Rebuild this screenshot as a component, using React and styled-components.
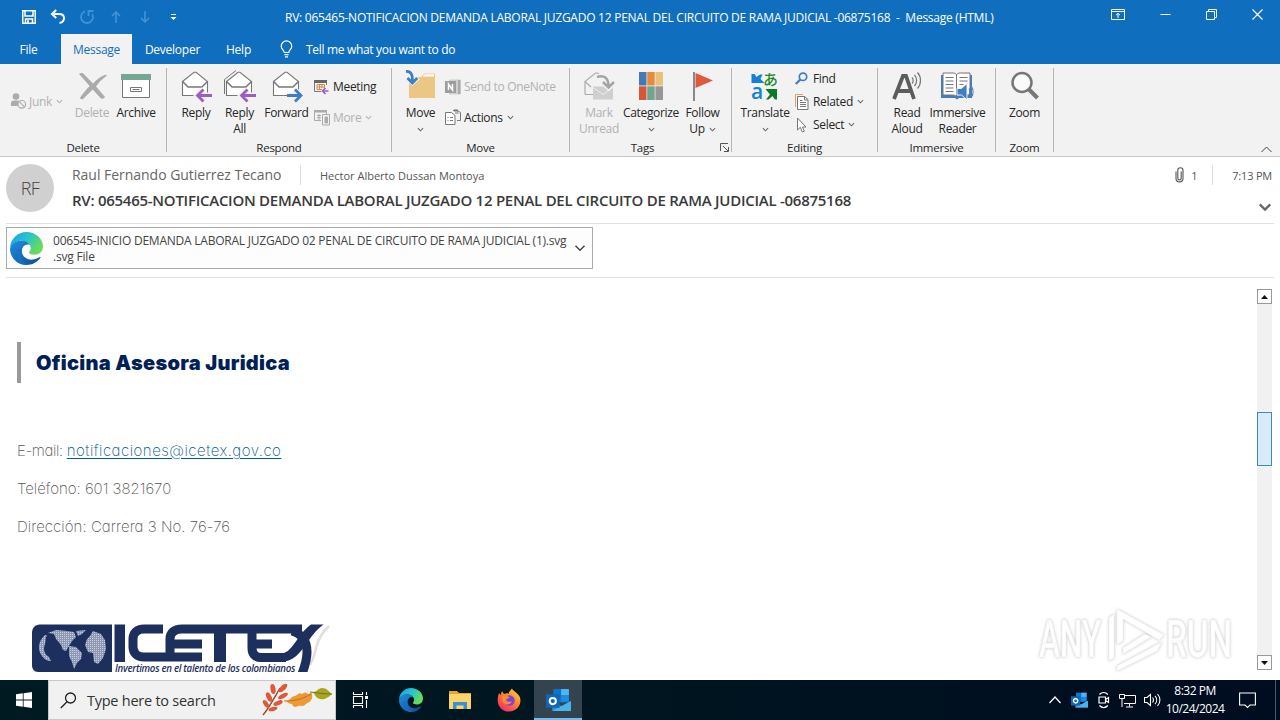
import React from "react";
import styled, { createGlobalStyle } from "styled-components";

const colors = {
  blue: "#106ebe",
  ribbon: "#f2f2f2",
  line: "#c6c6c6",
  text: "#262626",
  muted: "#b1b1b1",
  purple: "#9b5fc0",
  arrow: "#3f7fc1",
  navy: "#1d2f5c",
};

const ChevronDown = ({ size = 7, color = "#666", weight = 1.2 }) => (
  <svg width={size} height={size} viewBox="0 0 8 8" fill="none">
    <path d="M1 2.5 4 5.5 7 2.5" stroke={color} strokeWidth={weight} />
  </svg>
);

/* title bar icons */

const SaveIcon = () => (
  <svg width="16" height="16" viewBox="0 0 16 16" fill="none" stroke="#fff" strokeWidth="1.5">
    <path d="M1.75 1.75h12.5v12.5H1.75zM4 2v5h8V2M4.5 14v-4h7v4" />
    <path d="M7 11v3" />
  </svg>
);

const UndoIcon = () => (
  <svg width="16" height="16" viewBox="0 0 16 16" fill="none" stroke="#fff" strokeWidth="2">
    <path d="M6.2 1 2 5l4.2 4M2.500 5h6.500c3 0 5 1.800 5 4.300s-1.800 4.200-4.500 4.700" />
  </svg>
);

const RedoIcon = () => (
  <svg width="16" height="16" viewBox="0 0 16 16" fill="none" stroke="#3f92d6" strokeWidth="1.8">
    <path d="M6 2.300A6 6 0 1 0 13.200 5M9.500 7V2h5" />
  </svg>
);

const ArrowIcon = ({ down }) => (
  <svg width="12" height="14" viewBox="0 0 12 14" fill="none" stroke="#3f92d6" strokeWidth="1.7">
    {down ? <path d="M6 1v11M2 8l4 4 4-4" /> : <path d="M6 13V2M2 6l4-4 4 4" />}
  </svg>
);

const CustomizeIcon = () => (
  <svg width="7" height="8" viewBox="0 0 7 8" fill="#fff">
    <path d="M1 1h5v1H1zM.5 4h6l-3 3z" />
  </svg>
);

const BulbIcon = () => (
  <svg width="13" height="18" viewBox="0 0 13 18" fill="none" stroke="#fff" strokeWidth="1.2">
    <path d="M4.200 12.500c0-2.200-3-3.200-3-6.300a5.300 5.300 0 0 1 10.600 0c0 3.100-3 4.100-3 6.300zM4.400 14.600h4.200M5 16.800h3" />
  </svg>
);

const RibbonDisplayIcon = () => (
  <svg width="14" height="11" viewBox="0 0 14 11" fill="none" stroke="#fff">
    <path d="M.5.5h13v10H.5zM.5 2.500h13M7 9V4.500M5 6.200 7 4.300l2 1.900" />
  </svg>
);

const MinimizeIcon = () => (
  <svg width="11" height="11" viewBox="0 0 11 11" stroke="#fff">
    <path d="M.5 5.500h10" />
  </svg>
);

const RestoreIcon = () => (
  <svg width="11" height="11" viewBox="0 0 11 11" fill="none" stroke="#fff">
    <path d="M.5 2.500h8v8h-8zM2.500 2V.5h8v8H9" />
  </svg>
);

const CloseIcon = () => (
  <svg width="11" height="11" viewBox="0 0 11 11" stroke="#fff" strokeWidth="1.1">
    <path d="m.5.5 10 10m0-10-10 10" />
  </svg>
);

/* ribbon icons */

const JunkIcon = () => (
  <svg width="18" height="18" viewBox="0 0 18 18" fill="none">
    <circle cx="6" cy="4.500" r="3.300" fill="#ababab" />
    <path d="M1 14V11c0-1.700 1-2.600 3-2.600h5L7.500 14z" fill="#ababab" />
    <circle cx="11.800" cy="12.300" r="3.800" fill="#f2f2f2" stroke="#ababab" strokeWidth="1.200" />
    <path d="m9.200 9.600 5.300 5.300" stroke="#ababab" strokeWidth="1.200" />
  </svg>
);

const DeleteIcon = () => (
  <svg width="32" height="32" viewBox="0 0 32 32" fill="#ababab">
    <path d="M3 4c2-1.500 4-1 5.500.8L17 13.500C21 9 25 6 30 4.500l.8 1.200C26 9 23 12 20 16.500l9 10.500c-1 2.200-3.500 2.200-5 .5l-7.300-8L6.500 29.500 3.700 28.300C7 23.500 10 19.500 13.700 16z" />
  </svg>
);

const ArchiveIcon = () => (
  <svg width="32" height="32" viewBox="0 0 32 32" fill="none">
    <path d="M2.500 9.500h27v18h-27z" fill="#fff" stroke="#777" />
    <path d="M1 4h30v6H1z" fill="#74a894" />
    <path d="M10.500 17.500h11v4h-11zM12.500 19.500h7" stroke="#777" />
  </svg>
);

const Envelope = ({ color = "#777" }) => (
  <g stroke={color} strokeWidth="1.100" fill="#fff">
    <path d="M3.500 12.500v14h25v-14" />
    <path d="M3.500 12.500 15 3.300h2l11.500 9.200-5.500 5.500H9z" />
    <path d="M3.500 12.500 9 18h14l5.500-5.500" fill="none" />
  </g>
);

const MailIcon = ({ all, forward }) => (
  <svg width="34" height="34" viewBox="0 0 34 34" fill="none">
    {all && <path d="M1.500 25V10.500L13 1.500" stroke="#777" />}
    <Envelope />
    {forward ? (
      <path d="M17 26.500h13M24.500 20.500l6 6-6 6" stroke="#f2f2f2" strokeWidth="6" />
    ) : (
      <path d="M31 26.500H19M24.500 20.500l-6 6 6 6" stroke="#f2f2f2" strokeWidth="6" />
    )}
    {forward ? (
      <path d="M17 26.500h14M25 20.500l6 6-6 6" stroke={colors.arrow} strokeWidth="2.800" />
    ) : (
      <path d="M33 26.500H19M24.500 20.500l-6 6 6 6" stroke={colors.purple} strokeWidth="2.800" />
    )}
  </svg>
);

const MeetingIcon = () => (
  <svg width="16" height="16" viewBox="0 0 16 16" fill="none">
    <path d="M1.500 3v9.500H8M13.500 3v3" stroke="#777" />
    <path d="M1 1h13v3H1z" fill="#666" />
    <path d="M4 5.500h7.500V9M4 5.500v5h5M4 8h7M6.500 5.500v5M9 5.500V9" stroke="#d78b4e" />
    <path d="M15.500 12H9.500M12.500 9l-3 3 3 3" stroke={colors.purple} strokeWidth="1.700" />
  </svg>
);

const MoreIcon = () => (
  <svg width="17" height="17" viewBox="0 0 17 17" fill="none" stroke="#ababab">
    <path d="M1.500 3v8.500H8M13.500 3v2" />
    <path d="M1 1h13v2.500H1z" fill="#ababab" stroke="none" />
    <path d="M4 6.500h4M4 8.800h4M6 5v6" />
    <path d="M9.500 5.500h7v10.500h-7z" fill="#f2f2f2" />
    <path d="M12 8h2.500v6H12z" fill="#ababab" />
  </svg>
);

const MoveIcon = () => (
  <svg width="32" height="32" viewBox="0 0 32 32" fill="none">
    <path d="M4 7h12l3.500-3.500H30V28H4z" fill="#ebc684" />
    <path d="M17.500 6.500 20 4.300h9v2.200z" fill="#fff" />
    <path d="M1 1c5-.5 6.800 3 6.300 10M2.500 7.500l4.800 5L13 7.500" stroke="#f2f2f2" strokeWidth="5" />
    <path d="M1 1.500c5-.5 6.800 3 6.300 10M2.500 8l4.800 5 5-5" stroke={colors.arrow} strokeWidth="2.800" />
  </svg>
);

const OneNoteIcon = () => (
  <svg width="16" height="16" viewBox="0 0 16 16">
    <path d="M4 .5h11.500v15H4z" fill="#cfcfcf" />
    <path d="M0 2h11v12H0z" fill="#9d9d9d" />
    <path d="M13 1h2.500v14H13z" fill="#a9a9a9" />
    <path d="M3.500 11V5l4 6V5" stroke="#fff" strokeWidth="1.500" fill="none" />
  </svg>
);

const ActionsIcon = () => (
  <svg width="17" height="17" viewBox="0 0 17 17" fill="none" stroke="#777">
    <path d="M.5 3.500h6l3.500 3v9H.5z" fill="#fff" />
    <path d="M2.500 8.500h1M2.500 11.500h1M5 8.500h3M5 11.500h3M8 1.500h4l3.500 2v8H12M10 4h3.500" />
    <path d="M9 1.500h4" strokeWidth="2" />
  </svg>
);

const UnreadIcon = () => (
  <svg width="32" height="32" viewBox="0 0 32 32" fill="none">
    <path d="M2 24.500V11.500L12.500 3h2L23 10" stroke="#ababab" strokeWidth="1.200" fill="none" />
    <path d="m2 11.500 6 5.500M2 24.500h8" stroke="#ababab" strokeWidth="1.200" />
    <path d="M10 16.500h20v13H10z" fill="#cfcfcf" />
    <path d="m10 17.500 10 7 10-7" stroke="#ececec" />
    <path d="M15 7c6-2 10.500 1 10.500 9M19.500 12l6 6 5.500-6" stroke="#f2f2f2" strokeWidth="5" />
    <path d="M14 7c7-2.500 11.500 1 11.500 9M20 12l5.500 5.500L31 12" stroke="#a5a5a5" strokeWidth="2.500" />
  </svg>
);

const CategorizeIcon = () => (
  <svg width="24" height="28" viewBox="0 0 24 28">
    <path d="M0 0h7.500v13.500H0z" fill="#437ab5" />
    <path d="M8.200 0h7.500v13.500H8.200z" fill="#e58b40" />
    <path d="M16.400 0H24v13.500h-7.600z" fill="#e9c17b" />
    <path d="M0 14.300h7.500V28H0z" fill="#d65638" />
    <path d="M8.200 14.300h7.500V28H8.200z" fill="#70a591" />
    <path d="M16.400 14.300H24V28h-7.600z" fill="#979797" />
  </svg>
);

const FlagIcon = () => (
  <svg width="20" height="29" viewBox="0 0 20 29">
    <path d="M2.500 1 20 8.500 2.500 16z" fill="#e0583d" />
    <path d="M1 0v29" stroke="#777" strokeWidth="1.700" />
  </svg>
);

const TranslateIcon = () => (
  <svg width="28" height="30" viewBox="0 0 28 30" overflow="visible">
    <text x="12" y="14" fontFamily="Noto Sans CJK JP, sans-serif" fontSize="15" fontWeight="500" fill="#1f8a2c">
      あ
    </text>
    <text x="0" y="28" fontFamily="Open Sans, sans-serif" fontSize="21" fontWeight="600" fill="#1282d8">
      a
    </text>
    <path d="M.5 3h3l2 3L9 3.500h2.500L9.500 8l4 4H.5z" fill="#1282d8" />
    <path d="M14.500 18h11.500v10.500h-2l-2.500-3.500-4 3.500h-2.500l4-5z" fill="#0b7a25" />
  </svg>
);

const FindIcon = () => (
  <svg width="13" height="13" viewBox="0 0 13 13" fill="none" stroke={colors.arrow}>
    <circle cx="8" cy="4.800" r="3.700" strokeWidth="1.700" />
    <path d="M5.300 7.500.8 12" strokeWidth="2.300" />
  </svg>
);

const RelatedIcon = () => (
  <svg width="14" height="16" viewBox="0 0 14 16" fill="none" stroke="#777">
    <path d="M.5 13V.5H8" stroke="#e2a26c" />
    <path d="M2.500 2.500h7l3.500 3V15.500H2.500z" fill="#fff" />
    <path d="M9.500 2.500v3.500H13M5 8.500h6M5 10.500h6M5 12.500h6M5 6.500h2.500" />
  </svg>
);

const SelectIcon = () => (
  <svg width="12" height="16" viewBox="0 0 12 16" fill="#fff" stroke="#777">
    <path d="M2.500 1v12l2.800-2.700L7.300 15l2-.8L7.500 10H11z" />
  </svg>
);

const ReadAloudIcon = () => (
  <svg width="30" height="32" viewBox="0 0 30 32" fill="none">
    <path d="M2 29 11 6h3l8 23M5.500 21h13" stroke="#5c5c5c" strokeWidth="3.800" />
    <path d="M20 7.500c1.500 1.500 1.500 4.500 0 6M22.500 5c2.800 3 2.800 8 0 11M25.500 2.500c4 4.500 4 11.500 0 16" stroke="#777" strokeWidth="1.200" />
  </svg>
);

const ReaderIcon = () => (
  <svg width="33" height="30" viewBox="0 0 33 30" fill="none">
    <path d="M0 4h31v23H18l-2 1.500L14 27H0z" fill={colors.arrow} />
    <path d="M2 2h10c2 0 3.500 1 3.500 2C15.500 3 17 2 19 2h10v22H19c-2 0-3.500 1-3.500 2 0-1-1.500-2-3.500-2H2z" fill="#fff" stroke="#777" />
    <path d="M15.500 4v22M4.500 6.500h8M4.500 10h8M4.500 13.500h8M4.500 17h8M4.500 20.500h8M18.500 6.500h8M18.500 10h8M18.500 13.500h4" stroke="#777" />
    <path d="M16 17.500h4.500l5.500-5V29l-5.500-5H16z" fill={colors.arrow} stroke="#f2f2f2" />
    <path d="M28 17.500c1.200 2 1.200 4.500 0 6.500M30.500 15.500c2 3 2 7.500 0 10.500" stroke={colors.arrow} strokeWidth="1.200" />
  </svg>
);

const ZoomIcon = () => (
  <svg width="30" height="30" viewBox="0 0 30 30" fill="none" stroke="#777">
    <circle cx="12" cy="11.500" r="9.500" strokeWidth="2.500" fill="#fafafa" />
    <path d="m19 18.500 8.500 8.500" strokeWidth="4" />
  </svg>
);

const LauncherIcon = () => (
  <svg width="9" height="9" viewBox="0 0 9 9" fill="none" stroke="#555">
    <path d="M.5 8V.5H8M3 3l5 5M8.500 4v4.500H4" />
  </svg>
);

/* message icons */

const ClipIcon = () => (
  <svg width="9" height="16" viewBox="0 0 9 16" fill="none" stroke="#555" strokeWidth="1.100">
    <path d="M6.200 4.500v6.800c0 2.200-3.400 2.200-3.400 0V3.200c0-3.200 5.200-3.200 5.200 0v8.300c0 4.500-7 4.500-7 0V4.500" />
  </svg>
);

const EdgeIcon = ({ size, id }) => (
  <svg width={size} height={size} viewBox="0 0 32 32">
    <defs>
      <linearGradient id={`${id}-top`} x1="0" y1="0" x2="1" y2=".5">
        <stop offset="0" stopColor="#1b9de2" />
        <stop offset=".5" stopColor="#25c2d4" />
        <stop offset="1" stopColor="#6bdc55" />
      </linearGradient>
      <linearGradient id={`${id}-low`} x1="0" y1="0" x2="1" y2="1">
        <stop offset="0" stopColor="#1d8fe0" />
        <stop offset="1" stopColor="#114a97" />
      </linearGradient>
    </defs>
    <path d="M16 0c9.500 0 16 7 16 14 0 5-3.800 8-8 8-3 0-5.500-.8-5.500-2.200 0-1 1.700-1.500 1.700-4C20 11.500 16 8.500 11 8.500c-5 0-9 2.500-11 6.500C.8 6.500 7.500 0 16 0z" fill={`url(#${id}-top)`} />
    <path d="M0 16c1-5 5.500-7.500 11-7.500 4 0 7 1.500 8.300 4-4-1.500-7.800 1.500-7.800 6 0 6 6.500 9.500 12 8 2.500-.7 4-1.500 5.500-2.200.5-.2.900.2.500.7C26.500 29.500 21.500 32 16 32 7 32 0 25 0 16z" fill={`url(#${id}-low)`} />
    <path d="M11.500 15c-3 6-1 14 6.500 17-7 .5-12.500-4-12.500-10 0-3 2.500-6 6-7z" fill="#1570c9" opacity=".7" />
  </svg>
);

const IcetexLogo = () => (
  <svg width="302" height="52" viewBox="0 0 302 52">
    <defs>
      <pattern id="dots" width="2" height="2" patternUnits="userSpaceOnUse">
        <rect width="2" height="2" fill="#8c98b4" />
        <rect width="1" height="1" fill="#c6cddc" />
      </pattern>
    </defs>
    <path d="M299 6c-8 7-11 14-13 22-1 6-3 11-6 17" fill="none" stroke="#dedede" strokeWidth="2.500" />
    <path d="M10 4.500h72V52H8c-4 0-6-3-6-7V13c0-5 3-8.500 8-8.500z" fill={colors.navy} />
    <g fill="url(#dots)">
      <path d="M15 15c-7 6-8 15-3 21 2 3 5 5 9 5l-2-4c-5-3-6-8-4-13 1-3 0-6 2-9z" />
      <path d="M18 13l8-3 11 1 7 1 2 5-4 4-3 5-3 5-3-1-2-5-5-6-2-5-6-1z" />
      <path d="M39 26l7 1 6 6-1 6-4 4-3 6-2-7-3-6z" />
      <path d="M46 11l10-1-4 4-4 2zM60 16l3-5 8 3 4 6 1 9-3 9-5 6-4-2-1-9-5-1-3-7 2-6z" />
    </g>
    <path d="M84.500 4.500H95V42H84.500z" fill={colors.navy} />
    <g fill="none" stroke={colors.navy} strokeWidth="9">
      <path d="M133 9h-19c-7 0-11 4-11 10v8c0 6 4 10 11 10h58" />
      <path d="M272 9H152c-8 0-12 4-12 10V36M141 24h31" />
      <path d="M222 10v18c0 6 3 9.500 9 9.500h25M222 24h20" />
      <path d="M190 9V42" strokeWidth="12" />
      <path d="M262 11c10 3 15 10 15 21 0 8-2 14-5 22" strokeWidth="9" />
    </g>
    <path
      d="M281 4.500h12.500c-8 6-12 12-17 19-7 10-13 18.500-27 18.500l-1-8c8 0 12-5 17-12 5-7 9-13 15.500-17.500z"
      fill={colors.navy}
    />
    <text
      x="85"
      y="51.500"
      fontFamily="Open Sans, sans-serif"
      fontSize="10.500"
      fontStyle="italic"
      fontWeight="600"
      fill={colors.navy}
      textLength="180"
      lengthAdjust="spacingAndGlyphs"
    >
      Invertimos en el talento de los colombianos
    </text>
  </svg>
);

const AnyRunMark = () => (
  <svg width="204" height="66" viewBox="0 0 204 66" overflow="visible">
    <g
      fill="#fff"
      stroke="#efefef"
      strokeWidth=".5"
      fontFamily="Roboto, sans-serif"
      fontSize="51"
      fontWeight="500"
      style={{ filter: "drop-shadow(0 0 1.5px #c4c4c4)" }}
    >
      <text x="4" y="51" textLength="62" lengthAdjust="spacingAndGlyphs">
        ANY
      </text>
      <text x="131" y="51" textLength="66" lengthAdjust="spacingAndGlyphs">
        RUN
      </text>
      <path d="M74 12l5-4v44l-5 3zM82 3l47 26-5 5-36-21v22l-6 3zM82 60l45-24-5 9-40 20zM88 42l22-14 6 3-28 17z" />
    </g>
  </svg>
);

/* taskbar icons */

const WindowsIcon = () => (
  <svg width="16" height="16" viewBox="0 0 16 16" fill="#fff">
    <path d="M0 2.300 6.800 1.300v6.200H0zM7.600 1.200 16 0v7.500H7.600zM0 8.400h6.800v6.300L0 13.700zM7.600 8.400H16V16l-8.400-1.200z" />
  </svg>
);

const SearchIcon = () => (
  <svg width="17" height="17" viewBox="0 0 17 17" fill="none" stroke="#222" strokeWidth="1.300">
    <circle cx="10.500" cy="6" r="5" />
    <path d="M7 9.700.8 16" />
  </svg>
);

const LeavesIcon = () => (
  <svg width="72" height="34" viewBox="0 0 72 34">
    <path d="M2 32C8 25 12 17 19 5" stroke="#9c4430" strokeWidth="1.400" fill="none" />
    <g fill="#dc5a35">
      <ellipse cx="12" cy="6" rx="2.500" ry="5" transform="rotate(-10 12 6)" />
      <ellipse cx="22" cy="5" rx="2.500" ry="5.500" transform="rotate(45 22 5)" />
      <ellipse cx="8" cy="14" rx="2.500" ry="5" transform="rotate(-25 8 14)" />
      <ellipse cx="22" cy="13" rx="2.200" ry="5.500" transform="rotate(62 22 13)" />
      <ellipse cx="5" cy="21" rx="2.200" ry="4.500" transform="rotate(-35 5 21)" />
      <ellipse cx="17" cy="20" rx="2.200" ry="5" transform="rotate(68 17 20)" />
      <ellipse cx="12" cy="26" rx="2" ry="4.500" transform="rotate(75 12 26)" />
    </g>
    <path d="M25 18c4 0 5-5 9-5 3-1 4-4 7-2 2-2 4-2 6 0l4-1c0 3 1 5-1 7-1 3-4 2-6 5-3 2-5 0-7 1-3 2-5 1-6-2-2 0-4-1-6-3z" fill="#ed9a35" />
    <path d="M23 18c9 0 17-1 27-7" stroke="#c9682a" fill="none" />
    <path d="M52 9c4 0 5-4 9-4 5 0 6 3 10 6-4 4-8 6-12 5-4-1-5-4-7-7z" fill="#aaa51f" />
    <path d="M49 9c8 1 14 2 22 2" stroke="#6f7715" fill="none" />
  </svg>
);

const TaskViewIcon = () => (
  <svg width="17" height="16" viewBox="0 0 17 16" fill="none" stroke="#fff" strokeWidth="1.100">
    <path d="M1.500 4.500h9v7h-9zM1.500 0v2.500h9V0M1.500 16v-2.500h9V16M14.500 0v3M14.500 8v8" />
    <path d="M13 4h3v3h-3z" fill="#fff" stroke="none" />
  </svg>
);

const FolderIcon = () => (
  <svg width="22" height="20" viewBox="0 0 22 20">
    <path d="M0 1h8l2 2h12v16H0z" fill="#e9a52b" />
    <path d="M0 4h22v15H0z" fill="#fbd56c" />
    <path d="M4 19v-7h14v7h-3.500v-3.500h-7V19z" fill="#3c8fd3" />
  </svg>
);

const FirefoxIcon = () => (
  <svg width="24" height="24" viewBox="0 0 24 24">
    <defs>
      <linearGradient id="fox" x1="1" y1="0" x2=".2" y2="1">
        <stop offset="0" stopColor="#ffe23b" />
        <stop offset=".45" stopColor="#ff8a2a" />
        <stop offset="1" stopColor="#f4276b" />
      </linearGradient>
    </defs>
    <path d="M2 5l1.500 2L5 3l2 3c2-1 4-.8 5-.3L12 4l3-3.500c1 3 6 4 8 9 2 7-3 14-11 14C5 23.500.5 18 .7 12 .8 9 1.200 7 2 5z" fill="url(#fox)" />
    <circle cx="12.500" cy="12.500" r="5.200" fill="#7c43d9" />
    <path d="M5 8c3-1 7 0 7.500 2-2 .3-3 1-3.500 2 1 2 4 2.500 6 1-1 4-7 5-9 1-.8-2-1-4-1-6z" fill="#ff8b30" />
  </svg>
);

const OutlookIcon = ({ size }) => (
  <svg width={size} height={size} viewBox="0 0 24 24">
    <path d="M7 1h15v13H7z" fill="#1173c7" />
    <path d="M14.500 1H22v6h-7.500z" fill="#4ab8f0" />
    <path d="M14.500 7H22v6h-7.500z" fill="#1b8ee0" />
    <path d="M6 12.500l9 5 9-5V22H6z" fill="#2a8fd6" />
    <path d="M6 22l18-9.500V22z" fill="#48b4ea" />
    <path d="M0 6h13v13H0z" fill="#0f65b7" />
    <circle cx="6.500" cy="12.500" r="3" fill="none" stroke="#fff" strokeWidth="1.900" />
  </svg>
);

const CameraIcon = () => (
  <svg width="14" height="18" viewBox="0 0 14 18" fill="none" stroke="#fff" strokeWidth="1.200">
    <path d="M2.500 3.500c2.300-2.700 6-2.700 8.300 0M2.500 14.500c2.300 2.700 6 2.700 8.300 0M2 6h6.500v6H2zM8.500 8.500 11.500 6.500v5L8.500 9.500" />
  </svg>
);

const NetworkIcon = () => (
  <svg width="17" height="15" viewBox="0 0 17 15" fill="none" stroke="#fff">
    <path d="M5 2.500h11.500v8H5M10.500 10.500v3M7 14h7M.5 1.500h5v4h-5zM3 5.500V14" />
  </svg>
);

const SpeakerIcon = () => (
  <svg width="17" height="14" viewBox="0 0 17 14" fill="none" stroke="#fff" strokeWidth="1.100">
    <path d="M.5 4.500H3l3.500-3v11l-3.500-3H.5zM8.500 4.500c1.200 1.500 1.200 3.500 0 5M11 2.800c2.200 2.500 2.200 6 0 8.400M13.500 1c3.200 3.500 3.200 8.500 0 12" />
  </svg>
);

const NoticeIcon = () => (
  <svg width="17" height="17" viewBox="0 0 17 17" fill="none" stroke="#fff" strokeWidth="1.100">
    <path d="M.6 1h15.800v12H11l-2.500 2.500L6 13H.6z" />
  </svg>
);

const BigButton = ({ icon, lines, width, disabled, arrow, arrowInline }) => (
  <StyledBigButton $width={width} $disabled={disabled}>
    <span className="icon">{icon}</span>
    {lines.map((line, i) => (
      <span className="line" key={line}>
        {line}
        {arrowInline && i === lines.length - 1 && <ChevronDown />}
      </span>
    ))}
    {arrow && (
      <span className="line">
        <ChevronDown />
      </span>
    )}
  </StyledBigButton>
);

const SmallButton = ({ icon, children, disabled, arrow, gap }) => (
  <StyledSmallButton $disabled={disabled} $gap={gap}>
    {icon}
    <span>{children}</span>
    {arrow && <ChevronDown color={disabled ? colors.muted : "#666"} />}
  </StyledSmallButton>
);

const Ribbon = () => (
  <StyledRibbon>
    <Group $width={167} $left={10}>
      <div className="body">
        <ButtonColumn $width={61} $row={66}>
          <SmallButton icon={<JunkIcon />} gap={1} disabled arrow>
            Junk
          </SmallButton>
        </ButtonColumn>
        <BigButton icon={<DeleteIcon />} lines={["Delete"]} width={42} disabled />
        <BigButton icon={<ArchiveIcon />} lines={["Archive"]} width={46} />
      </div>
      <div className="label">Delete</div>
    </Group>
    <Group $width={225} $left={8}>
      <div className="body">
        <BigButton icon={<MailIcon />} lines={["Reply"]} width={42} />
        <BigButton icon={<MailIcon all />} lines={["Reply", "All"]} width={45} />
        <BigButton icon={<MailIcon forward />} lines={["Forward"]} width={49} />
        <ButtonColumn $width={75} $row={31} $top={3} $left={2}>
          <SmallButton icon={<MeetingIcon />} gap={4}>
            Meeting
          </SmallButton>
          <SmallButton icon={<MoreIcon />} gap={3} disabled arrow>
            More
          </SmallButton>
        </ButtonColumn>
      </div>
      <div className="label">Respond</div>
    </Group>
    <Group $width={178} $left={9}>
      <div className="body">
        <BigButton icon={<MoveIcon />} lines={["Move"]} width={39} arrow />
        <ButtonColumn $width={120} $row={31} $top={3} $left={5}>
          <SmallButton icon={<OneNoteIcon />} gap={3} disabled>
            Send to OneNote
          </SmallButton>
          <SmallButton icon={<ActionsIcon />} gap={2} arrow>
            Actions
          </SmallButton>
        </ButtonColumn>
      </div>
      <div className="label">Move</div>
    </Group>
    <Group $width={162} $left={8}>
      <div className="body">
        <BigButton icon={<UnreadIcon />} lines={["Mark", "Unread"]} width={42} disabled />
        <BigButton icon={<CategorizeIcon />} lines={["Categorize"]} width={62} arrow />
        <BigButton icon={<FlagIcon />} lines={["Follow", "Up"]} width={41} arrowInline />
      </div>
      <div className="label launcher">
        <span>Tags</span>
        <LauncherIcon />
      </div>
    </Group>
    <Group $width={146} $left={8}>
      <div className="body">
        <BigButton icon={<TranslateIcon />} lines={["Translate"]} width={50} arrow />
        <ButtonColumn $width={75} $row={23} $top={-1} $left={5}>
          <SmallButton icon={<FindIcon />} gap={5}>
            Find
          </SmallButton>
          <SmallButton icon={<RelatedIcon />} gap={4} arrow>
            Related
          </SmallButton>
          <SmallButton icon={<SelectIcon />} gap={6} arrow>
            Select
          </SmallButton>
        </ButtonColumn>
      </div>
      <div className="label">Editing</div>
    </Group>
    <Group $width={118} $left={9}>
      <div className="body">
        <BigButton icon={<ReadAloudIcon />} lines={["Read", "Aloud"]} width={40} />
        <BigButton icon={<ReaderIcon />} lines={["Immersive", "Reader"]} width={61} />
      </div>
      <div className="label">Immersive</div>
    </Group>
    <Group $width={58} $left={8}>
      <div className="body">
        <BigButton icon={<ZoomIcon />} lines={["Zoom"]} width={41} />
      </div>
      <div className="label">Zoom</div>
    </Group>
    <Collapse>
      <svg width="11" height="7" viewBox="0 0 11 7" fill="none" stroke="#444">
        <path d="M.5 6 5.500 1l5 5" />
      </svg>
    </Collapse>
  </StyledRibbon>
);

const App = () => (
  <>
    <GlobalStyle />
    <Screen>
      <TitleBar>
        <QuickAccess>
          <SaveIcon />
          <UndoIcon />
          <RedoIcon />
          <ArrowIcon />
          <ArrowIcon down />
          <CustomizeIcon />
        </QuickAccess>
        <Title>
          RV: 065465-NOTIFICACION DEMANDA LABORAL JUZGADO 12 PENAL DEL CIRCUITO DE RAMA JUDICIAL
          -06875168&nbsp; -&nbsp; Message (HTML)
        </Title>
        <WindowControls>
          <RibbonDisplayIcon />
          <MinimizeIcon />
          <RestoreIcon />
          <CloseIcon />
        </WindowControls>
      </TitleBar>
      <Tabs>
        <Tab $width={57}>File</Tab>
        <Tab $width={71} $active>
          Message
        </Tab>
        <Tab $width={81}>Developer</Tab>
        <Tab $width={51}>Help</Tab>
        <TellMe>
          <BulbIcon />
          <span>Tell me what you want to do</span>
        </TellMe>
      </Tabs>
      <Ribbon />
      <MessageHeader>
        <Avatar>RF</Avatar>
        <HeaderText>
          <div className="people">
            <Sender>Raul Fernando Gutierrez Tecano</Sender>
            <Recipient>Hector Alberto Dussan Montoya</Recipient>
          </div>
          <Subject>
            RV: 065465-NOTIFICACION DEMANDA LABORAL JUZGADO 12 PENAL DEL CIRCUITO DE RAMA JUDICIAL
            -06875168
          </Subject>
        </HeaderText>
        <HeaderMeta>
          <div className="row">
            <ClipIcon />
            <span className="count">1</span>
            <span className="time">7:13 PM</span>
          </div>
          <ChevronDown size={14} color="#666" weight={1.3} />
        </HeaderMeta>
      </MessageHeader>
      <Attachments>
        <Attachment>
          <EdgeIcon size={33} id="file" />
          <div className="name">
            <p className="title">
              006545-INICIO DEMANDA LABORAL JUZGADO 02 PENAL DE CIRCUITO DE RAMA JUDICIAL (1).svg
            </p>
            <p>.svg File</p>
          </div>
          <ChevronDown size={12} color="#444" weight={1} />
        </Attachment>
      </Attachments>
      <MessageBody>
        <Letter>
          <Office>Oficina Asesora Juridica</Office>
          <Contact $spacing={-0.35}>
            E-mail: <a href="#mail">notificaciones@icetex.gov.co</a>
          </Contact>
          <Contact $spacing={-0.02}>Teléfono: 601 3821670</Contact>
          <Contact $spacing={0.05}>Dirección: Carrera 3 No. 76-76</Contact>
          <Logo>
            <IcetexLogo />
          </Logo>
        </Letter>
        <Scrollbar>
          <ScrollButton>
            <svg width="7" height="4" viewBox="0 0 7 4">
              <path d="M0 4 3.500 0 7 4z" fill="#111" />
            </svg>
          </ScrollButton>
          <Thumb />
          <ScrollButton>
            <svg width="7" height="4" viewBox="0 0 7 4">
              <path d="M0 0h7L3.500 4z" fill="#111" />
            </svg>
          </ScrollButton>
        </Scrollbar>
        <Watermark>
          <AnyRunMark />
        </Watermark>
      </MessageBody>
      <Taskbar>
        <Task>
          <WindowsIcon />
        </Task>
        <SearchBox>
          <SearchIcon />
          <span>Type here to search</span>
          <LeavesIcon />
        </SearchBox>
        <Task>
          <TaskViewIcon />
        </Task>
        <Task $gap={3}>
          <EdgeIcon size={24} id="edge" />
        </Task>
        <Task $gap={1}>
          <FolderIcon />
        </Task>
        <Task $gap={1}>
          <FirefoxIcon />
        </Task>
        <Task $gap={1} $active>
          <OutlookIcon size={25} />
        </Task>
        <Tray>
          <svg width="12" height="8" viewBox="0 0 12 8" fill="none" stroke="#fff" strokeWidth="1.200">
            <path d="m.5 7 5.500-6 5.500 6" />
          </svg>
          <OutlookIcon size={17} />
          <CameraIcon />
          <NetworkIcon />
          <SpeakerIcon />
          <Clock>
            <span>8:32 PM</span>
            <span>10/24/2024</span>
          </Clock>
          <NoticeIcon />
        </Tray>
      </Taskbar>
    </Screen>
  </>
);

const GlobalStyle = createGlobalStyle`
  * {
    box-sizing: border-box;
  }
  body {
    margin: 0;
    font-family: "Open Sans", "Noto Sans", sans-serif;
    font-size: 12px;
    letter-spacing: -0.32px;
    color: ${colors.text};
  }
  p {
    margin: 0;
  }
  svg {
    display: block;
    flex: none;
  }
`;

const Screen = styled.div`
  display: flex;
  flex-direction: column;
  width: 1280px;
  height: 720px;
  overflow: hidden;
  background: #fff;
`;

const TitleBar = styled.header`
  display: flex;
  align-items: center;
  height: 34px;
  background: ${colors.blue};
  color: #fff;
`;

const QuickAccess = styled.div`
  display: flex;
  align-items: center;
  width: 285px;
  padding-left: 21px;
  gap: 13px;
  svg:nth-child(4) {
    margin-left: 2px;
  }
  svg:nth-child(5) {
    margin-left: 4px;
  }
  svg:nth-child(6) {
    margin-left: 6px;
  }
`;

const Title = styled.div`
  flex: 1;
  padding-top: 2px;
  white-space: nowrap;
  line-height: 16px;
  letter-spacing: -0.25px;
`;

const WindowControls = styled.div`
  display: flex;
  align-items: center;
  gap: 35px;
  padding-right: 17px;
  margin-top: -5px;
`;

const Tabs = styled.nav`
  display: flex;
  height: 30px;
  background: ${colors.blue};
  color: #fff;
`;

const Tab = styled.div`
  width: ${({ $width }) => $width}px;
  display: flex;
  align-items: center;
  justify-content: center;
  margin-left: ${({ $active }) => ($active ? 4 : 0)}px;
  background: ${({ $active }) => ($active ? colors.ribbon : "transparent")};
  color: ${({ $active }) => ($active ? colors.blue : "#fff")};
  letter-spacing: -0.25px;
`;

const TellMe = styled.div`
  display: flex;
  align-items: center;
  gap: 13px;
  margin-left: 16px;
`;

const StyledRibbon = styled.section`
  display: flex;
  flex: none;
  height: 93px;
  background: ${colors.ribbon};
  border-bottom: 1px solid ${colors.line};
`;

const Group = styled.div`
  width: ${({ $width }) => $width}px;
  height: 84px;
  margin-top: 4px;
  display: flex;
  flex-direction: column;
  border-right: 1px solid #b5b5b5;
  .body {
    display: flex;
    flex: none;
    height: 72px;
    padding-left: ${({ $left }) => $left}px;
  }
  .label {
    display: flex;
    flex: none;
    align-items: center;
    justify-content: center;
    height: 15px;
    font-size: 11.5px;
    letter-spacing: -0.25px;
  }
  .launcher {
    span {
      flex: 1;
      text-align: center;
      padding-right: 5px;
    }
    svg {
      margin-right: 2px;
    }
  }
`;

const StyledBigButton = styled.div`
  width: ${({ $width }) => $width}px;
  display: flex;
  flex-direction: column;
  align-items: center;
  white-space: nowrap;
  color: ${({ $disabled }) => ($disabled ? colors.muted : colors.text)};
  .icon {
    height: 36px;
    margin-bottom: 1px;
    display: flex;
    align-items: center;
  }
  .line {
    display: flex;
    align-items: center;
    gap: 4px;
    height: 16px;
    line-height: 16px;
  }
`;

const ButtonColumn = styled.div`
  width: ${({ $width }) => $width}px;
  margin-left: ${({ $left }) => $left || 0}px;
  margin-top: ${({ $top }) => $top || 0}px;
  display: grid;
  align-content: start;
  grid-auto-rows: ${({ $row }) => $row}px;
`;

const StyledSmallButton = styled.div`
  display: flex;
  align-items: center;
  white-space: nowrap;
  color: ${({ $disabled }) => ($disabled ? colors.muted : colors.text)};
  span {
    margin: 0 4px 0 ${({ $gap }) => $gap}px;
  }
`;

const Collapse = styled.div`
  margin-left: auto;
  align-self: flex-end;
  padding: 0 8px 3px 0;
`;

const MessageHeader = styled.section`
  display: flex;
  flex: none;
  height: 67px;
  margin: 0 6px;
  border-bottom: 1px solid #e1e1e1;
`;

const Avatar = styled.div`
  width: 48px;
  height: 48px;
  margin-top: 7px;
  border-radius: 50%;
  display: flex;
  align-items: center;
  justify-content: center;
  background: #d0d0d0;
  color: #444;
  font-size: 18px;
  font-weight: 300;
  letter-spacing: -0.5px;
`;

const HeaderText = styled.div`
  flex: 1;
  padding: 8px 0 0 17px;
  white-space: nowrap;
  .people {
    display: flex;
    align-items: center;
    height: 20px;
  }
`;

const Sender = styled.div`
  width: 230px;
  height: 20px;
  padding-left: 1px;
  border-right: 1px solid #dcdcdc;
  font-size: 14px;
  line-height: 19px;
  letter-spacing: -0.03px;
  color: #666;
`;

const Recipient = styled.div`
  padding: 1px 0 0 19px;
  font-size: 11px;
  letter-spacing: 0;
  color: #555;
`;

const Subject = styled.h1`
  margin: 4px 0 0 1px;
  font-size: 15px;
  font-weight: 600;
  line-height: 22px;
  letter-spacing: -0.26px;
  color: #3a3a3a;
`;

const HeaderMeta = styled.div`
  display: flex;
  flex-direction: column;
  align-items: flex-end;
  padding-top: 8px;
  font-size: 11px;
  color: #555;
  .row {
    display: flex;
    align-items: center;
    height: 20px;
    margin-right: -4px;
    margin-bottom: 15px;
  }
  .count {
    margin: 1px 15px 0 7px;
  }
  .time {
    border-left: 1px solid #dcdcdc;
    padding: 3px 6px 0 19px;
    height: 20px;
    letter-spacing: -0.2px;
  }
  & > svg {
    margin-right: 2px;
  }
`;

const Attachments = styled.section`
  flex: none;
  height: 54px;
  margin: 0 6px;
  padding-top: 3px;
  border-bottom: 1px solid #e1e1e1;
`;

const Attachment = styled.div`
  display: flex;
  align-items: center;
  width: 587px;
  height: 42px;
  padding: 0 6px 0 3px;
  border: 1px solid #ababab;
  background: #fdfdfd;
  white-space: nowrap;
  .name {
    flex: 1;
    padding: 2px 0 0 10px;
    line-height: 16px;
    letter-spacing: -0.2px;
    color: #444;
  }
  .title {
    letter-spacing: -0.23px;
  }
`;

const MessageBody = styled.main`
  position: relative;
  display: flex;
  flex: none;
  height: 402px;
`;

const Letter = styled.article`
  flex: 1;
  height: 394px;
  overflow: hidden;
  padding: 64px 0 0 17px;
`;

const Office = styled.h2`
  margin: 0 0 49px;
  padding: 1px 0 0 15px;
  border-left: 4px solid #999;
  font-family: Inter, "Liberation Sans", sans-serif;
  font-size: 20px;
  font-weight: 900;
  line-height: 40px;
  letter-spacing: 0.28px;
  color: #002057;
`;

const Contact = styled.p`
  height: 38px;
  line-height: 38px;
  font-family: Inter, Lato, sans-serif;
  font-feature-settings: "cv11";
  font-size: 15px;
  font-weight: 200;
  letter-spacing: ${({ $spacing }) => $spacing}px;
  color: #555;
  a {
    color: #0058a0;
    letter-spacing: 0.5px;
    text-underline-offset: 2px;
  }
`;

const Logo = styled.div`
  margin: 74px 0 0 13px;
`;

const Scrollbar = styled.aside`
  display: flex;
  flex-direction: column;
  width: 15px;
  height: 381px;
  margin: 11px 8px 0 0;
  background: #f1f1f1;
`;

const ScrollButton = styled.div`
  display: flex;
  align-items: center;
  justify-content: center;
  height: 15px;
  border: 1px solid #999;
  background: #fff;
`;

const Thumb = styled.div`
  height: 54px;
  margin: 108px 0 189px;
  border: 1px solid #3c8ac4;
  background: #d9ebf9;
`;

const Watermark = styled.div`
  position: absolute;
  right: 41px;
  bottom: 8px;
`;

const Taskbar = styled.footer`
  display: flex;
  flex: none;
  height: 40px;
  background: linear-gradient(90deg, #001a22, #001520 50%, #000c20);
  color: #fff;
`;

const Task = styled.div`
  width: 48px;
  margin-left: ${({ $gap }) => $gap || 0}px;
  display: flex;
  align-items: center;
  justify-content: center;
  background: ${({ $active }) => ($active ? "#33444e" : "transparent")};
  box-shadow: ${({ $active }) => ($active ? "inset 0 -2px #76b9ed" : "none")};
`;

const SearchBox = styled.div`
  display: flex;
  align-items: center;
  width: 288px;
  padding: 0 2px 0 11px;
  background: #f1f1f1;
  border: 1px solid #c9c9c9;
  color: #333;
  font-size: 14.5px;
  letter-spacing: -0.25px;
  span {
    flex: 1;
    padding-left: 10px;
  }
`;

const Tray = styled.div`
  display: flex;
  align-items: center;
  gap: 8px;
  margin: 0 4px 0 auto;
  padding-right: 19px;
  border-right: 1px solid #4d5866;
  svg:nth-child(2) {
    margin-left: 2px;
  }
  svg:nth-child(3) {
    margin-left: 1px;
  }
`;

const Clock = styled.div`
  display: flex;
  flex-direction: column;
  align-items: center;
  width: 58px;
  margin: 0 7px 0 -3px;
  line-height: 18px;
  letter-spacing: -0.5px;
`;

export default App;
